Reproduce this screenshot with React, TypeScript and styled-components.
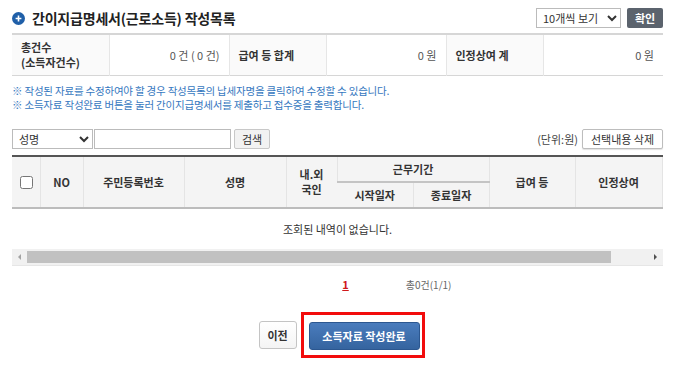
import * as React from 'react';
import styled, { createGlobalStyle } from 'styled-components';

const GlobalStyle = createGlobalStyle`
  body {
    margin: 0;
    background: #fff;
    color: #333;
    font-family: 'Noto Sans CJK KR', 'Noto Sans', sans-serif;
  }
`;

const Page = styled.div`
  padding: 8px 17px 0 12px;
`;

const TitleBar = styled.div`
  display: flex;
  align-items: center;
  justify-content: space-between;
  height: 20px;
`;

const Title = styled.h2`
  display: flex;
  align-items: center;
  gap: 7px;
  margin: 0;
  font-size: 14px;
  font-weight: bold;
  color: #222;
  letter-spacing: -0.2px;
`;

const Tools = styled.div`
  display: flex;
  gap: 6px;
`;

const Select = styled.select<{ $w: number }>`
  width: ${(p) => p.$w}px;
  height: 20px;
  border: 1px solid #bbb;
  border-radius: 0;
  background: #fff;
  font-family: inherit;
  font-size: 11px;
  color: #333;
  padding: 0 2px;
`;

const DarkButton = styled.button`
  width: 36px;
  height: 20px;
  border: none;
  border-radius: 2px;
  background: #5b636d;
  color: #fff;
  font-family: inherit;
  font-size: 11px;
  font-weight: bold;
  padding: 0;
`;

const SummaryTable = styled.table`
  width: 100%;
  margin-top: 5px;
  border-collapse: collapse;
  table-layout: fixed;
  border-top: 2px solid #d6d6d6;
  border-bottom: 1px solid #d6d6d6;
  font-size: 11px;

  td,
  th {
    height: 40px;
    padding: 0 9px;
    border-left: 1px solid #e6e6e6;
    line-height: 15px;
  }

  th {
    text-align: left;
    font-weight: bold;
    color: #333;
    background: #fafafa;
  }

  td {
    text-align: right;
    color: #555;
  }

  tr > *:first-child {
    border-left: none;
  }
`;

const Notes = styled.div`
  margin-top: 8px;
  font-size: 10.5px;
  line-height: 14px;
  color: #3678c0;
  letter-spacing: -0.2px;
`;

const SearchBar = styled.div`
  display: flex;
  align-items: center;
  justify-content: space-between;
  margin-top: 17px;
`;

const Group = styled.div`
  display: flex;
  align-items: center;
`;

const TextInput = styled.input`
  width: 137px;
  height: 20px;
  box-sizing: border-box;
  margin-left: 1px;
  border: 1px solid #bbb;
  font-size: 11px;
`;

const LightButton = styled.button<{ $w: number }>`
  width: ${(p) => p.$w}px;
  height: 20px;
  margin-left: 3px;
  border: 1px solid #c8c8c8;
  border-radius: 2px;
  background: #f2f2f2;
  color: #333;
  font-family: inherit;
  font-size: 11px;
  padding: 0;
`;

const WhiteButton = styled(LightButton)`
  background: #fff;
  border-color: #bdbdbd;
  box-shadow: 0 1px 1px rgba(0, 0, 0, 0.12);
`;

const Unit = styled.span`
  font-size: 11px;
  color: #444;
  margin-right: 1px;
`;

const Scroller = styled.div`
  margin-top: 6px;
  overflow: hidden;
`;

const GridTable = styled.table`
  width: 696px;
  border-collapse: collapse;
  table-layout: fixed;
  border-top: 2px solid #555;
  border-bottom: 2px solid #bcbcbc;
  font-size: 11px;

  th {
    background: #f4f4f4;
    font-weight: bold;
    color: #333;
    text-align: center;
    border-left: 1px solid #e4e4e4;
    padding: 0;
    line-height: 15px;
  }

  th:first-child {
    border-left: none;
  }
`;

const HeadRow = styled.tr<{ $h: number }>`
  height: ${(p) => p.$h}px;
`;

const GroupCell = styled.th`
  border-bottom: 2px solid #c4c4c4;
`;

const Empty = styled.div`
  height: 40px;
  line-height: 40px;
  text-align: center;
  font-size: 11px;
  color: #333;
`;

const ScrollTrack = styled.div`
  display: flex;
  align-items: center;
  height: 16px;
  background: #f1f1f1;
  border-bottom: 1px solid #e6e6e6;
`;

const ScrollArrow = styled.div<{ $dir: 'left' | 'right'; $active?: boolean }>`
  width: 15px;
  display: flex;
  justify-content: center;

  &::before {
    content: '';
    border-top: 3px solid transparent;
    border-bottom: 3px solid transparent;
    ${(p) => (p.$dir === 'left' ? 'border-right' : 'border-left')}: 3px solid
      ${(p) => (p.$active ? '#505050' : '#a3a3a3')};
  }
`;

const ScrollThumb = styled.div`
  height: 12px;
  width: 584px;
  background: #c1c1c1;
`;

const ScrollRest = styled.div`
  flex: 1;
`;

const Paging = styled.div`
  display: grid;
  grid-template-columns: 1fr auto 1fr;
  align-items: center;
  margin-top: 10px;
  padding-left: 14px;
  font-size: 11px;
`;

const PageNo = styled.a`
  color: #d0191b;
  font-weight: bold;
  text-decoration: underline;
  padding: 0 2px 0 4px;
`;

const Total = styled.span`
  padding-left: 55px;
  font-size: 10px;
  color: #666;
`;

const Actions = styled.div`
  display: flex;
  justify-content: center;
  align-items: center;
  gap: 4px;
  margin-top: 20px;
  padding-left: 8px;
`;

const PrevButton = styled.button`
  width: 38px;
  height: 28px;
  border: 1px solid #c4c4c4;
  border-radius: 3px;
  background: linear-gradient(#fff, #f4f4f4);
  color: #333;
  font-family: inherit;
  font-size: 11px;
  font-weight: bold;
  padding: 0;
`;

const Highlight = styled.div`
  border: 3px solid #f20c0c;
  padding: 7px 2px 5px 5px;
`;

const PrimaryButton = styled.button`
  width: 111px;
  height: 28px;
  border: 1px solid #2c5790;
  border-radius: 3px;
  background: linear-gradient(#4a7cbd, #35649f);
  color: #fff;
  font-family: inherit;
  font-size: 11px;
  font-weight: bold;
  padding: 0;
`;

const cols = [28, 43, 101, 102, 51, 76, 76, 86, 87, 46];

function TitleIcon() {
  return (
    <svg width="13" height="13" viewBox="0 0 13 13">
      <circle cx="6.5" cy="6.5" r="6.5" fill="#1f5fa8" />
      <path d="M6.5 3.6v5.8M3.6 6.5h5.8" stroke="#fff" strokeWidth="1.6" />
    </svg>
  );
}

export default function App() {
  return (
    <Page>
      <GlobalStyle />
      <TitleBar>
        <Title>
          <TitleIcon />
          간이지급명세서(근로소득) 작성목록
        </Title>
        <Tools>
          <Select $w={85} defaultValue="10">
            <option value="10">10개씩 보기</option>
            <option value="20">20개씩 보기</option>
          </Select>
          <DarkButton>확인</DarkButton>
        </Tools>
      </TitleBar>

      <SummaryTable>
        <colgroup>
          <col style={{ width: 97 }} />
          <col style={{ width: 120 }} />
          <col style={{ width: 97 }} />
          <col style={{ width: 120 }} />
          <col style={{ width: 97 }} />
          <col style={{ width: 120 }} />
        </colgroup>
        <tbody>
          <tr>
            <th>
              총건수
              <br />
              (소득자건수)
            </th>
            <td>0 건 ( 0 건)</td>
            <th>급여 등 합계</th>
            <td>0 원</td>
            <th>인정상여 계</th>
            <td>0 원</td>
          </tr>
        </tbody>
      </SummaryTable>

      <Notes>
        <div>※ 작성된 자료를 수정하여야 할 경우 작성목록의 납세자명을 클릭하여 수정할 수 있습니다.</div>
        <div>※ 소득자료 작성완료 버튼을 눌러 간이지급명세서를 제출하고 접수증을 출력합니다.</div>
      </Notes>

      <SearchBar>
        <Group>
          <Select $w={81} defaultValue="name">
            <option value="name">성명</option>
            <option value="id">주민등록번호</option>
          </Select>
          <TextInput />
          <LightButton $w={36}>검색</LightButton>
        </Group>
        <Group>
          <Unit>(단위:원)</Unit>
          <WhiteButton $w={81}>선택내용 삭제</WhiteButton>
        </Group>
      </SearchBar>

      <Scroller>
        <GridTable>
          <colgroup>
            {cols.map((w, i) => (
              <col key={i} style={{ width: w }} />
            ))}
          </colgroup>
          <thead>
            <HeadRow $h={26}>
              <th rowSpan={2}>
                <input type="checkbox" />
              </th>
              <th rowSpan={2}>NO</th>
              <th rowSpan={2}>주민등록번호</th>
              <th rowSpan={2}>성명</th>
              <th rowSpan={2}>
                내.외
                <br />
                국인
              </th>
              <GroupCell colSpan={2}>근무기간</GroupCell>
              <th rowSpan={2}>급여 등</th>
              <th rowSpan={2}>인정상여</th>
              <th rowSpan={2} />
            </HeadRow>
            <HeadRow $h={26}>
              <th>시작일자</th>
              <th>종료일자</th>
            </HeadRow>
          </thead>
        </GridTable>
        <Empty>조회된 내역이 없습니다.</Empty>
        <ScrollTrack>
          <ScrollArrow $dir="left" />
          <ScrollThumb />
          <ScrollRest />
          <ScrollArrow $dir="right" $active />
        </ScrollTrack>
      </Scroller>

      <Paging>
        <span />
        <PageNo>1</PageNo>
        <Total>총0건(1/1)</Total>
      </Paging>

      <Actions>
        <PrevButton>이전</PrevButton>
        <Highlight>
          <PrimaryButton>소득자료 작성완료</PrimaryButton>
        </Highlight>
      </Actions>
    </Page>
  );
}
